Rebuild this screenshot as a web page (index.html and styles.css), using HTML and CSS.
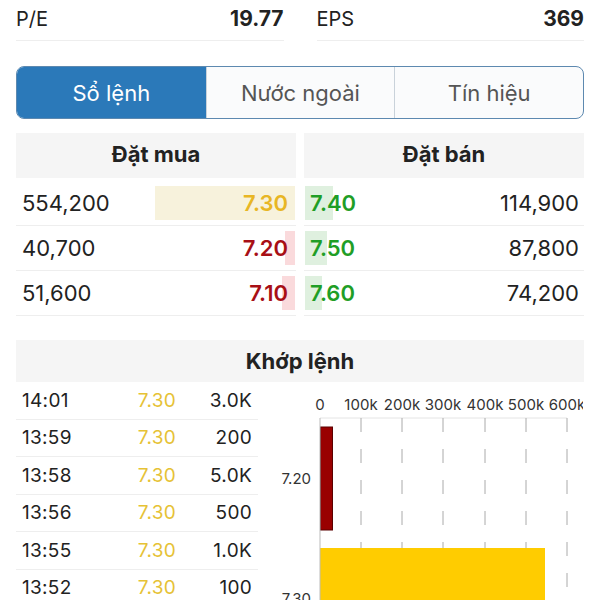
FILE: index.html
```html
<!DOCTYPE html>
<html lang="vi">
<head>
    <meta charset="UTF-8" />
    <meta name="viewport" content="width=device-width, initial-scale=1.0" />
    <title>Sổ lệnh</title>
    <link rel="stylesheet" href="styles.css">
</head>
<body>
<div class="stats">
    <div class="stat"><span>P/E</span><b>19.77</b></div>
    <div class="stat"><span>EPS</span><b>369</b></div>
</div>

<div class="tabs">
    <div class="tab active">Sổ lệnh</div>
    <div class="tab">Nước ngoài</div>
    <div class="tab">Tín hiệu</div>
</div>

<div class="book">
    <div class="side buy">
        <div class="side-head">Đặt mua</div>
        <div class="level">
            <span class="qty">554,200</span>
            <span class="price ref"><i class="bar" style="width:140px"></i>7.30</span>
        </div>
        <div class="level">
            <span class="qty">40,700</span>
            <span class="price down"><i class="bar" style="width:10px"></i>7.20</span>
        </div>
        <div class="level">
            <span class="qty">51,600</span>
            <span class="price down"><i class="bar" style="width:13px"></i>7.10</span>
        </div>
    </div>
    <div class="side sell">
        <div class="side-head">Đặt bán</div>
        <div class="level">
            <span class="price up"><i class="bar" style="width:28px"></i>7.40</span>
            <span class="qty">114,900</span>
        </div>
        <div class="level">
            <span class="price up"><i class="bar" style="width:22px"></i>7.50</span>
            <span class="qty">87,800</span>
        </div>
        <div class="level">
            <span class="price up"><i class="bar" style="width:17px"></i>7.60</span>
            <span class="qty">74,200</span>
        </div>
    </div>
</div>

<div class="matched">
    <div class="matched-head">Khớp lệnh</div>
    <div class="matched-body">
        <div class="trades">
            <div class="trade"><span>14:01</span><span class="t-price">7.30</span><span class="t-vol">3.0K</span></div>
            <div class="trade"><span>13:59</span><span class="t-price">7.30</span><span class="t-vol">200</span></div>
            <div class="trade"><span>13:58</span><span class="t-price">7.30</span><span class="t-vol">5.0K</span></div>
            <div class="trade"><span>13:56</span><span class="t-price">7.30</span><span class="t-vol">500</span></div>
            <div class="trade"><span>13:55</span><span class="t-price">7.30</span><span class="t-vol">1.0K</span></div>
            <div class="trade"><span>13:52</span><span class="t-price">7.30</span><span class="t-vol">100</span></div>
        </div>

        <!-- Khối lượng theo giá -->
        <svg class="chart" width="325" height="240" viewBox="0 0 325 240">
            <g class="ticks" text-anchor="middle">
                <text x="62" y="28">0</text>
                <text x="103" y="28">100k</text>
                <text x="144" y="28">200k</text>
                <text x="185" y="28">300k</text>
                <text x="227" y="28">400k</text>
                <text x="268" y="28">500k</text>
                <text x="309" y="28">600k</text>
            </g>
            <line x1="62" y1="36" x2="309" y2="36" stroke="#e4e4e4" />
            <g stroke="#aaa" stroke-dasharray="14 17">
                <line x1="103" y1="36" x2="103" y2="240" />
                <line x1="144" y1="36" x2="144" y2="240" />
                <line x1="185" y1="36" x2="185" y2="240" />
                <line x1="227" y1="36" x2="227" y2="240" />
                <line x1="268" y1="36" x2="268" y2="240" />
                <line x1="309" y1="36" x2="309" y2="240" />
            </g>
            <rect x="62.5" y="45" width="12" height="103" fill="#990000" stroke="#5a0000" />
            <rect x="62" y="166" width="225" height="80" fill="#ffcc00" />
            <line x1="62" y1="36" x2="62" y2="240" stroke="#bbb" />
            <g class="levels" text-anchor="end">
                <text x="53" y="102">7.20</text>
                <text x="53" y="222">7.30</text>
            </g>
        </svg>
    </div>
</div>
</body>
</html>
```

FILE: styles.css
```css
body {
  margin: 0;
  padding: 0 16px;
  height: 600px;
  overflow: hidden;
  background: #fff;
  color: #222;
  font-family: Inter, "Noto Sans", sans-serif;
}
.stats {
  display: grid;
  grid-template-columns: 1fr 1fr;
  gap: 33px;
}
.stat {
  display: flex;
  justify-content: space-between;
  align-items: center;
  height: 41px;
  padding-bottom: 3px;
  box-sizing: border-box;
  border-bottom: 1px solid #eee;
  font-size: 20px;
}
.stat b {
  font-size: 21px;
}
.tabs {
  display: grid;
  grid-template-columns: 1fr 1fr 1fr;
  margin-top: 25px;
  height: 53px;
  box-sizing: border-box;
  border: 1.5px solid #5d89b0;
  border-radius: 8px;
  overflow: hidden;
  background: #fafbfc;
}
.tab {
  display: flex;
  align-items: center;
  justify-content: center;
  font-size: 22px;
  color: #555;
  border-left: 1px solid #c9d2da;
}
.tab:first-child {
  border-left: none;
}
.tab.active {
  background: #2b79b9;
  color: #fff;
}
.book {
  display: grid;
  grid-template-columns: 1fr 1fr;
  gap: 8px;
  margin-top: 14px;
}
.side-head, .matched-head {
  height: 45px;
  line-height: 43px;
  text-align: center;
  font-size: 22px;
  font-weight: bold;
  background: #f5f5f5;
}
.side-head {
  margin-bottom: 3px;
}
.level {
  display: flex;
  justify-content: space-between;
  align-items: center;
  height: 45px;
  box-sizing: border-box;
  border-bottom: 1px solid #eee;
  font-size: 22px;
}
.buy .qty {
  padding-left: 6px;
}
.sell .qty {
  padding-right: 5px;
}
.price {
  position: relative;
  display: flex;
  align-items: center;
  height: 34px;
  font-weight: 600;
}
.buy .price {
  padding-right: 8px;
}
.sell .price {
  padding-left: 6px;
}
.price .bar {
  position: absolute;
  top: 0;
  bottom: 0;
  z-index: -1;
}
.buy .bar {
  right: 1px;
}
.sell .bar {
  left: 1px;
}
.ref {
  color: #e8b624;
}
.ref .bar {
  background: #f7f2dc;
}
.down {
  color: #a80f16;
}
.down .bar {
  background: #fadadc;
}
.up {
  color: #1f9e26;
}
.up .bar {
  background: #dff0df;
}
.matched {
  margin-top: 24px;
}
.matched-head {
  height: 42px;
  line-height: 42px;
}
.matched-body {
  display: flex;
}
.trades {
  width: 242px;
}
.trade {
  display: grid;
  grid-template-columns: 100px 82px 1fr;
  align-items: center;
  height: 37.5px;
  box-sizing: border-box;
  border-bottom: 1px solid #eee;
  font-size: 19px;
  letter-spacing: 0.3px;
  color: #222;
}
.trade span:first-child {
  padding-left: 6px;
}
.t-price {
  text-align: center;
  color: #e6c235;
}
.t-vol {
  text-align: right;
  padding-right: 6px;
}
.chart {
  display: block;
  flex: none;
}
.chart text {
  font-family: Inter, "Noto Sans", sans-serif;
  font-size: 15px;
  fill: #333;
}
```
